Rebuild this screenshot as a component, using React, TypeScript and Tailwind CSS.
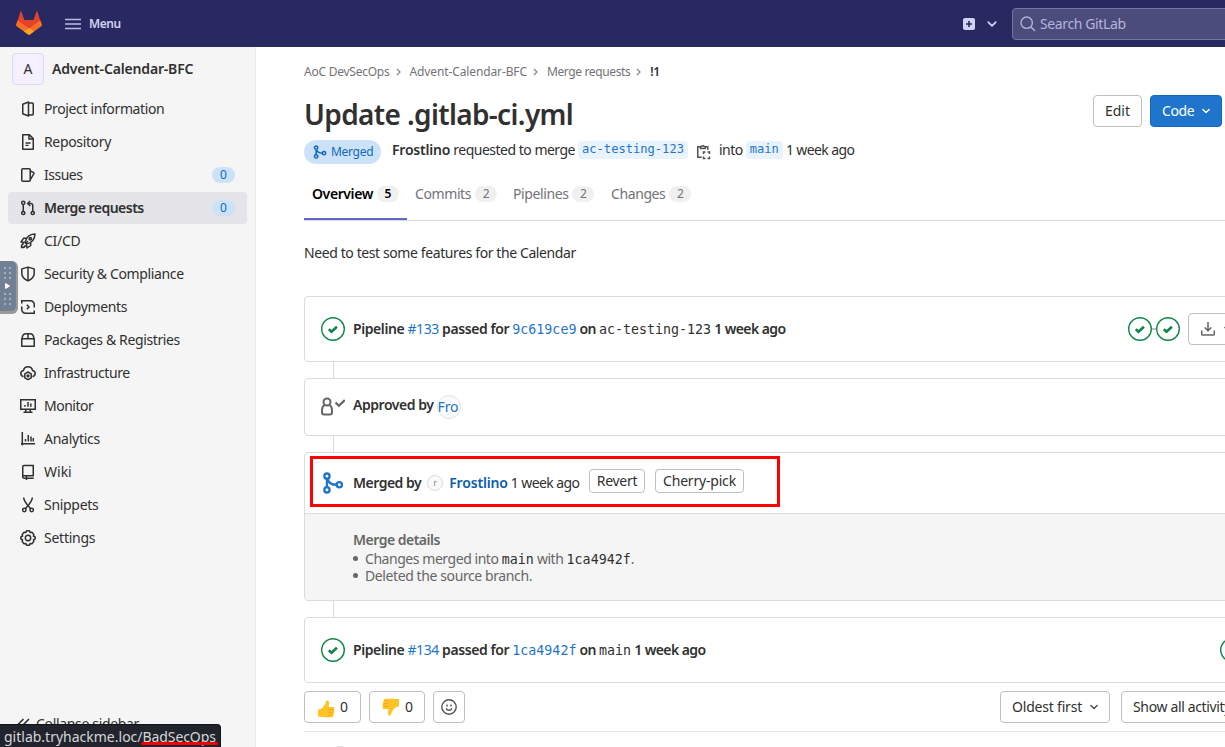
import React from "react";

type SvgProps = { className?: string; children: React.ReactNode; size?: number; sw?: number };

function Icon({ className = "", children, size = 16, sw = 1.5 }: SvgProps) {
  return (
    <svg
      width={size}
      height={size}
      viewBox="0 0 16 16"
      fill="none"
      stroke="currentColor"
      strokeWidth={sw}
      className={`block shrink-0 ${className}`}
    >
      {children}
    </svg>
  );
}

function Chevron({ className = "", size = 12 }: { className?: string; size?: number }) {
  return (
    <Icon size={size} sw={2.4} className={className}>
      <path d="M3 5.5l5 5 5-5" strokeLinecap="round" strokeLinejoin="round" />
    </Icon>
  );
}

function MergeGlyph({ size, className, sw = 1.8 }: { size: number; className?: string; sw?: number }) {
  return (
    <Icon size={size} className={className} sw={sw}>
      <circle cx="3.600" cy="3" r="1.900" />
      <circle cx="3.600" cy="13" r="1.900" />
      <circle cx="12.600" cy="9.300" r="1.900" />
      <path d="M3.600 5v6M4 5c.6 2.700 2.600 4.300 6.600 4.300" />
    </Icon>
  );
}

function StatusCheck() {
  return (
    <svg width="24" height="24" viewBox="0 0 24 24" fill="none" className="block shrink-0 text-[#108548]">
      <circle cx="12" cy="12" r="11.300" stroke="currentColor" strokeWidth="1.400" />
      <path d="M7.800 12.300l2.700 2.500 5.400-5.100" stroke="currentColor" strokeWidth="2.600" />
    </svg>
  );
}

const icons: Record<string, React.ReactNode> = {
  info: (
    <>
      <path d="M8.500 1v14L2.750 12.700V3.300z" strokeLinejoin="round" />
      <path d="M8.500 2h3.800c.500 0 .950.400.950.900v10.200c0 .500-.400.900-.950.900H8.500" />
    </>
  ),
  repo: (
    <>
      <path d="M2.750 .85h6.700l3.800 3.800v10.500H2.750z" strokeLinejoin="round" />
      <path d="M9 1v4h4.200" />
      <path d="M5.500 9h5M5.500 11.400h3" strokeWidth="1.300" />
    </>
  ),
  issues: (
    <>
      <rect x="1.750" y="1.750" width="8.500" height="12.500" rx="1" />
      <path d="M10.400 4l3.200 1.600c.400.200.500.600.300 1L10.500 12.500" />
    </>
  ),
  mr: (
    <>
      <circle cx="3.250" cy="2.800" r="1.600" />
      <circle cx="3.250" cy="13" r="1.600" />
      <circle cx="12.750" cy="13" r="1.600" />
      <path d="M3.250 4.400v7M12.750 11.400V5.600c0-1.300-.800-2.100-2.100-2.100H8.500" />
      <path d="M10.200 1L7.700 3.500 10.200 6" />
    </>
  ),
  rocket: (
    <>
      <path d="M5 9.500C6 4.500 9.500 1.200 15 1c-.200 5.500-3.500 9-8.500 10z" strokeLinejoin="round" />
      <path d="M6 5.300H3.500L1 9l3.700.600M10.700 10v2.500L7 15l-.600-3.700" strokeLinejoin="round" />
      <circle cx="10.300" cy="5.700" r="1.200" />
      <path d="M3.800 10.500c-2 .500-2.400 2-2.300 4 2 .100 3.500-.300 4-2.300M6 10l2-2" />
    </>
  ),
  shield: (
    <>
      <path d="M8 1.100l6.200 1.800v4.300c0 3.300-2.200 5.800-6.200 7.700-4-1.900-6.200-4.400-6.200-7.700V2.900z" strokeLinejoin="round" />
      <path d="M8 1.500v13" />
    </>
  ),
  deploy: (
    <>
      <path d="M2 1.750h8.500a3.750 3.750 0 0 1 3.750 3.750v3M14 14.250H5.500a3.750 3.750 0 0 1-3.750-3.750v-3" />
      <path d="M1.750 1v3.500M14.250 15v-3.500M6.800 5.800L9 8l-2.200 2.200" />
    </>
  ),
  pkg: (
    <>
      <path d="M1.750 6.750h12.500v7.500H1.750z" strokeLinejoin="round" />
      <path d="M2.200 6.500c0-2.700 1.400-4.750 3.800-4.750h4c2.400 0 3.800 2.050 3.800 4.750M8 1.750v5" />
    </>
  ),
  infra: (
    <>
      <path d="M3.500 11.700C1.800 11.200.8 10 .8 8.500c0-1.600 1.100-2.800 2.700-3.100C4 3.200 5.700 1.800 8 1.800s4 1.400 4.500 3.600c1.600.300 2.700 1.500 2.700 3.100 0 1.500-1 2.700-2.700 3.200" />
      <path d="M8 7l3.200 1.800v4L8 14.700l-3.200-1.900v-4z" strokeLinejoin="round" />
      <circle cx="8" cy="10.800" r=".9" />
    </>
  ),
  monitor: (
    <>
      <rect x=".75" y="1.750" width="14.500" height="9.500" />
      <path d="M5 8.800V7M8 8.800V4M10.800 8.800V5.500M6 11.500l-.500 2.500M10 11.500l.500 2.500M3.500 14.200h9" />
    </>
  ),
  analytics: <path d="M2.300 1v13.500M1 12.750h14M5.500 10.500V8M8.300 10.500V4M11 10.500V5.500M13.300 10.500V7" />,
  wiki: (
    <>
      <path d="M2.750 12.500V2.500c0-.600.400-1 1-1h9.500v10.300H4.200c-.900 0-1.500.500-1.500 1.200s.600 1.250 1.500 1.250h9.500" />
      <path d="M6.500 11.800V16M13.250 11v1" />
    </>
  ),
  snippets: (
    <>
      <circle cx="4.300" cy="13" r="1.700" />
      <circle cx="11.700" cy="13" r="1.700" />
      <path d="M3.700 .5c0 2.500 1.500 4.500 3.300 7l3.700 4.200M12.300 .5c0 2.500-1.500 4.500-3.300 7l-3.700 4.200" />
    </>
  ),
  settings: (
    <>
      <path d="M6.600 .8h2.800l.700 1.700 1.900-.300 1.900 2.400-.500 1.400 1.700 1v2l-1.700 1 .500 1.400-1.900 2.400-1.900-.300-.700 1.700H6.600l-.700-1.700-1.900.300-1.900-2.400.500-1.400-1.700-1V7l1.700-1-.500-1.400 1.900-2.400 1.900.300z" strokeLinejoin="round" />
      <circle cx="8" cy="8" r="2.700" />
    </>
  ),
};

const nav: { icon: string; label: string; track: string; count?: number; active?: boolean }[] = [
  { icon: "info", label: "Project information", track: "tracking-[-0.37px]" },
  { icon: "repo", label: "Repository", track: "tracking-[-0.35px]" },
  { icon: "issues", label: "Issues", track: "tracking-[-0.5px]", count: 0 },
  { icon: "mr", label: "Merge requests", track: "tracking-[-0.53px]", count: 0, active: true },
  { icon: "rocket", label: "CI/CD", track: "tracking-[-0.3px]" },
  { icon: "shield", label: "Security & Compliance", track: "tracking-[-0.37px]" },
  { icon: "deploy", label: "Deployments", track: "tracking-[-0.37px]" },
  { icon: "pkg", label: "Packages & Registries", track: "tracking-[-0.37px]" },
  { icon: "infra", label: "Infrastructure", track: "tracking-[-0.42px]" },
  { icon: "monitor", label: "Monitor", track: "tracking-[-0.5px]" },
  { icon: "analytics", label: "Analytics", track: "tracking-[-0.25px]" },
  { icon: "wiki", label: "Wiki", track: "tracking-normal" },
  { icon: "snippets", label: "Snippets", track: "tracking-[-0.3px]" },
  { icon: "settings", label: "Settings", track: "tracking-[-0.25px]" },
];

function TopBar() {
  return (
    <header className="flex h-[47px] shrink-0 items-center bg-[#292961] text-[#d1d1f0]">
      <svg width="26" height="25" viewBox="0 0 26 25" className="ml-4 block shrink-0">
        <path d="M.3 14.200L4.400.8c.200-.600.900-.600 1.100 0L8.300 9h9.200L20.400.8c.200-.600.900-.600 1.100 0l4.200 13.400L13 24z" fill="#e24329" />
        <path d="M13 24L.7 15.200C0 14.700-.1 13.600.3 12.700L1.800 9.200 13 17.500l11.200-8.300 1.500 3.500c.400.900.3 2-.4 2.500z" fill="#fc6d26" />
        <path d="M13 24l-5-3.600 5-3.500 5 3.500z" fill="#fca326" />
      </svg>
      <svg width="16" height="12" viewBox="0 0 16 12" className="ml-[23px] block shrink-0">
        <path d="M0 1.500h16M0 6h16M0 10.500h16" stroke="#bdbde4" strokeWidth="1.500" />
      </svg>
      <span className="ml-2 w-[31px] shrink-0 text-xs font-semibold tracking-[-0.4px]">Menu</span>
      <svg width="12" height="12" viewBox="0 0 12 12" className="ml-[843px] block shrink-0">
        <rect width="12" height="12" rx="2" fill="#d1d1f0" />
        <path d="M6 3v6M3 6h6" stroke="#292961" strokeWidth="1.600" />
      </svg>
      <Chevron className="ml-[11px]" size={12} />
      <div className="ml-[14px] flex h-8 w-[300px] shrink-0 items-center rounded border border-[#7474a6] bg-[#4b4b7c] pl-[7px] text-sm text-[#b5b5da]">
        <Icon sw={1.4}>
          <circle cx="6.700" cy="6.700" r="5.700" />
          <path d="M11 11l4 4" />
        </Icon>
        <span className="ml-1 tracking-[-0.38px]">Search GitLab</span>
      </div>
    </header>
  );
}

function Sidebar() {
  return (
    <aside className="relative flex w-64 shrink-0 flex-col border-r border-[#e9e9e9] bg-[#f5f5f5] px-2 pt-1.5">
      <div className="mb-2 flex h-8 items-center pl-1">
        <span className="flex size-8 items-center justify-center rounded border border-[#e1d8f5] bg-[#f4f0ff] text-sm">A</span>
        <span className="ml-2 text-sm font-semibold tracking-[-0.17px]">Advent-Calendar-BFC</span>
      </div>
      <nav className="flex flex-col gap-px">
        {nav.map((n) => (
          <a
            key={n.label}
            className={`flex h-8 w-[239px] items-center rounded pl-3 pr-3 text-sm ${n.active ? "bg-[#e4e4e9] font-semibold" : ""}`}
          >
            <Icon>{icons[n.icon]}</Icon>
            <span className={`ml-2 ${n.track}`}>{n.label}</span>
            {n.count !== undefined && (
              <span className="ml-auto flex h-4 w-[23px] items-center justify-center rounded-full bg-[#cbe2f9] text-xs font-normal text-[#1068bf]">
                {n.count}
              </span>
            )}
          </a>
        ))}
      </nav>
      <div className="mt-auto flex h-[46px] items-center pl-2 text-sm">
        <Icon sw={1.600}>
          <path d="M7.500 3L2.500 8l5 5M13 3L8 8l5 5" />
        </Icon>
        <span className="ml-1 tracking-[-0.33px]">Collapse sidebar</span>
      </div>
      <div className="absolute left-0 top-[214px] flex h-[53px] w-[18px] items-start rounded-r-md bg-[#999a9b]">
        <svg width="16" height="50" viewBox="0 0 16 50" className="block">
          <path d="M0 0h11a5 5 0 0 1 5 5v40a5 5 0 0 1-5 5H0z" fill="#728096" />
          <path d="M5.500 22.500v5l4-2.500z" fill="#fff" stroke="#fff" strokeLinejoin="round" />
          <path d="M5 6v14M10 6v14M5 32v14M10 32v14" stroke="#a5afbf" strokeWidth="2" strokeDasharray="2 3" />
        </svg>
      </div>
      <div className="absolute -bottom-px left-0 flex h-[24px] w-[221px] items-center rounded-tr border-r border-t border-[#111319] bg-[#21242c] pl-1 text-sm text-[#d6d7d9]">
        <span>gitlab.tryhackme.loc/</span>
        <span className="relative tracking-[-0.1px]">
          BadSecOps
          <span className="absolute -left-0.5 -right-0.5 bottom-[1.5px] h-[3px] rounded bg-[#f40000]" />
        </span>
      </div>
    </aside>
  );
}

function Mono({ children, className = "" }: { children: React.ReactNode; className?: string }) {
  return <span className={`font-['DejaVu_Sans_Mono',monospace] text-[13.300px] font-normal tracking-normal ${className}`}>{children}</span>;
}

function Ref({ children, className = "" }: { children: React.ReactNode; className?: string }) {
  return (
    <span className={`flex h-[18px] items-center rounded bg-[#e9f3fc] px-1 font-['DejaVu_Sans_Mono',monospace] text-[12.100px] text-[#1f75cb] ${className}`}>
      {children}
    </span>
  );
}

function Card({ children, className }: { children: React.ReactNode; className: string }) {
  return <section className={`w-[1000px] shrink-0 rounded border border-[#dbdbdb] bg-white ${className}`}>{children}</section>;
}

function Connector() {
  return <div className="ml-[29px] h-4 w-px shrink-0 bg-[#dbdbdb]" />;
}

const btn = "flex items-center rounded border border-[#bfbfbf] bg-white text-sm";

function Thumb({ down = false }: { down?: boolean }) {
  return (
    <svg width="18" height="18" viewBox="0 0 18 18" className={`block shrink-0 ${down ? "-scale-100" : "mt-1"}`}>
      <path d="M1 9.500C3.500 9.300 5.200 8.500 6.500 6.500 7.500 5 8.500 3.800 9 1.600 9.200.6 10 .2 10.900.6c1.300.6 1.400 2.200 1.100 3.600L11.500 7h4.300c1.800 0 2.200 2.200.9 2.800 1.100.600 1 2.300-.1 2.700.8.700.5 2.200-.5 2.500.4 1.100-.3 2.200-1.600 2.200H8C5.500 17.200 4 16.800 1 16.800z" fill="#ffc326" />
      <path d="M11.500 9.700h5M11.500 12.400h4.800M11.500 15h4.300" stroke="#e99b16" strokeWidth=".6" />
    </svg>
  );
}

function PipelineText({ id, sha, branch }: { id: string; sha: string; branch: string }) {
  return (
    <>
      <span className="tracking-[-0.42px]">
        Pipeline <span className="font-normal text-[#1f75cb]">{id}</span> passed for{" "}
      </span>
      <Mono className="text-[#1f75cb]">{sha}</Mono>
      <span className="tracking-[-0.55px]"> on </span>
      <Mono>{branch}</Mono>
      <span className="tracking-[-0.57px]"> 1 week ago</span>
    </>
  );
}

const tabs = [
  { label: "Overview", n: 5, w: "w-[103px]" },
  { label: "Commits", n: 2, w: "w-[98px]" },
  { label: "Pipelines", n: 2, w: "w-[98px]" },
  { label: "Changes", n: 2, w: "w-[96px]" },
];

const crumbs = [
  { label: "AoC DevSecOps", track: "tracking-[-0.24px]" },
  { label: "Advent-Calendar-BFC", track: "tracking-[-0.12px]" },
  { label: "Merge requests", track: "tracking-[-0.37px]" },
];

export default function App() {
  return (
    <div className="flex h-[747px] w-[1225px] flex-col overflow-hidden bg-white font-['Noto_Sans',sans-serif] text-[#303030]">
      <TopBar />
      <div className="flex min-h-0 flex-1">
        <Sidebar />
        <main className="flex min-w-0 flex-1 flex-col overflow-hidden whitespace-nowrap pl-12">
          <div className="flex h-[48px] shrink-0 items-center pt-px text-xs text-[#737278]">
            {crumbs.map((c) => (
              <React.Fragment key={c.label}>
                <span className={c.track}>{c.label}</span>
                <svg width="6" height="8" viewBox="0 0 6 8" className="ml-[6px] mr-[8px] block">
                  <path d="M1 1l3 3-3 3" fill="none" stroke="#89888d" strokeWidth="1.300" />
                </svg>
              </React.Fragment>
            ))}
            <span className="font-semibold tracking-[-0.4px] text-[#303030]">!1</span>
          </div>

          <div className="flex h-[45px] shrink-0">
            <h1 className="w-[789px] text-[28px] font-semibold leading-[38px] tracking-[-0.64px]">Update .gitlab-ci.yml</h1>
            <button className={`${btn} h-8 w-[49px] justify-center`}>Edit</button>
            <button className="ml-2 flex h-8 w-[72px] items-center rounded border border-[#1068bf] bg-[#1f75cb] pl-[11px] text-sm text-white">
              <span className="w-8 tracking-[-0.4px]">Code</span>
              <Chevron size={10} className="ml-[7px]" />
            </button>
          </div>

          <div className="flex h-6 shrink-0 items-start text-sm">
            <span className="flex h-6 w-[77px] items-center rounded-full bg-[#cbe2f9] pl-[9px] text-xs text-[#1068bf]">
              <MergeGlyph size={14} />
              <span className="ml-1 tracking-[-0.3px]">Merged</span>
            </span>
            <div className="ml-[11px] flex h-5 items-center">
              <span className="font-semibold tracking-[-0.2px]">Frostlino</span>
              <span className="ml-[3px] tracking-[-0.5px]">requested to merge</span>
              <Ref className="ml-[3px]">ac-testing-123</Ref>
              <Icon className="ml-[7px] mt-1 text-[#535158]" sw={1.5}>
                <path d="M5 2.750H2.750v10.500h4M10.500 2.750h2.250V6" />
                <path d="M5.500 4.500V2.500h1.200a1.200 1.200 0 0 1 2.300 0h1.300v2z" strokeLinejoin="round" />
                <path d="M8.500 10V8h2M12.500 8h2v2M14.500 12.500v2h-2M10.500 14.500h-2v-2" />
              </Icon>
              <span className="ml-2 tracking-[-0.5px]">into</span>
              <Ref className="ml-[3px]">main</Ref>
              <span className="ml-[3px] tracking-[-0.6px]">1 week ago</span>
            </div>
          </div>

          <div className="flex h-[57px] w-[1000px] shrink-0 items-end border-b border-[#dbdbdb] text-sm text-[#737278]">
            {tabs.map((t, i) => (
              <div
                key={t.label}
                className={`flex h-[51px] items-center pl-2 ${t.w} ${i === 0 ? "border-b-2 border-[#6666c4] font-semibold text-black" : "border-b-2 border-transparent"}`}
              >
                <span className="tracking-[-0.4px]">{t.label}</span>
                <span className="ml-1 flex h-4 w-[22px] items-center justify-center rounded-full bg-[#f0f0f0] text-xs">{t.n}</span>
              </div>
            ))}
          </div>

          <p className="flex h-[75px] shrink-0 items-start pt-[22px] text-sm leading-5 tracking-[-0.4px]">Need to test some features for the Calendar</p>

          <Card className="flex h-[66px] items-center pl-4 text-sm font-semibold">
            <StatusCheck />
            <div className="ml-2 w-[775px]">
              <PipelineText id="#133" sha="9c619ce9" branch="ac-testing-123" />
            </div>
            <StatusCheck />
            <span className="h-0.5 w-1 bg-[#bfbfbf]" />
            <StatusCheck />
            <button className={`${btn} ml-2 h-8 w-14 shrink-0 pl-[11px] text-[#666]`}>
              <Icon>
                <path d="M8 1v8M4.800 6.500L8 9.700l3.200-3.200M1.750 9.500v3.700c0 .500.400.800.800.800h10.900c.500 0 .800-.300.800-.800V9.500" />
              </Icon>
              <Chevron size={10} className="ml-[7px]" />
            </button>
          </Card>
          <Connector />
          <Card className="flex h-[58px] items-center pl-4 text-sm font-semibold">
            <svg width="24" height="20" viewBox="0 0 24 20" fill="none" stroke="currentColor" className="block text-[#666]" strokeWidth="2">
              <circle cx="6" cy="5" r="3.500" />
              <path d="M3.500 8C1.700 9.200 1 10.800 1 13v2.500c0 1.500.5 2 2 2h6c1.500 0 2-.5 2-2V13c0-2.200-.7-3.800-2.500-5" />
              <path d="M14.500 5.500l3.300 3.200 6-5.600" strokeWidth="2.200" />
            </svg>
            <span className="-mt-1 ml-2 tracking-[-0.45px]">Approved by</span>
            <span className="-mt-px ml-[3px] flex size-6 items-center overflow-hidden rounded-full border border-[#e4e4e4] bg-[#fafafa] font-normal tracking-[-0.2px] text-[#1f75cb]">Fro</span>
          </Card>
          <Connector />
          <section className="relative h-[149px] w-[1000px] shrink-0 overflow-hidden rounded border border-[#dbdbdb]">
            <div className="flex h-[61px] items-center border-b border-[#dbdbdb] pl-[17px] text-sm">
              <MergeGlyph size={22} className="text-[#1f75cb]" sw={1.700} />
              <span className="ml-[9px] font-semibold tracking-[-0.5px]">Merged by</span>
              <span className="ml-[6px] flex size-4 items-center justify-center rounded-full border border-[#dcdcdc] bg-[#fafafa] text-[8px] text-[#777]">r</span>
              <span className="ml-[6px] font-semibold tracking-[-0.15px] text-[#0b5cad]">Frostlino</span>
              <span className="ml-[3px] tracking-[-0.6px]">1 week ago</span>
              <div className="-mt-1 ml-auto flex w-[714px] gap-[10px]">
                <button className={`${btn} h-6 w-14 justify-center border-[#aaa] tracking-[-0.3px]`}>Revert</button>
                <button className={`${btn} h-6 w-[89px] justify-center border-[#aaa] tracking-[-0.2px]`}>Cherry-pick</button>
              </div>
            </div>
            <div className="h-[86px] bg-[#f5f5f5] pl-12 pt-[17px] text-sm leading-[17px] text-[#666]">
              <p className="mb-px font-semibold leading-[18px] tracking-[-0.5px]">Merge details</p>
              <p className="flex h-[17px] items-center">
                <span className="mr-[7px] size-[5px] rounded-full bg-[#666]" />
                <span className="tracking-[-0.45px]">Changes merged into <Mono className="text-[#303030]">main</Mono> with <Mono className="text-[#303030]">1ca4942f</Mono>.</span>
              </p>
              <p className="flex h-[17px] items-center">
                <span className="mr-[7px] size-[5px] rounded-full bg-[#666]" />
                <span className="tracking-[-0.4px]">Deleted the source branch.</span>
              </p>
            </div>
            <div className="absolute left-[5px] top-[3px] h-[51px] w-[470px] border-[3px] border-[#f00]" />
          </section>
          <Connector />
          <Card className="flex h-[66px] items-center pl-4 text-sm font-semibold">
            <StatusCheck />
            <div className="ml-2 w-[867px]">
              <PipelineText id="#134" sha="1ca4942f" branch="main" />
            </div>
            <StatusCheck />
          </Card>

          <div className="flex h-[49px] w-[1000px] shrink-0 items-start border-b border-[#e9e9e9] pt-2">
            <button className={`${btn} h-8 w-[57px] pl-3`}>
              <Thumb />
              <span className="ml-[5px]">0</span>
            </button>
            <button className={`${btn} ml-2 h-8 w-14 pl-3`}>
              <Thumb down />
              <span className="ml-[5px]">0</span>
            </button>
            <button className={`${btn} ml-2 h-8 w-8 justify-center text-[#535158]`}>
              <Icon sw={1.400}>
                <circle cx="8" cy="8" r="7.200" />
                <path d="M5.200 9.200c.4 1.400 1.400 2.100 2.800 2.100s2.400-.7 2.800-2.100M6 5.500v2M10 5.500v2" />
              </Icon>
            </button>
            <button className={`${btn} ml-[535px] h-8 w-[110px] pl-[11px]`}>
              <span className="w-[70px] tracking-[-0.2px]">Oldest first</span>
              <Chevron size={10} className="ml-[7px] text-[#535158]" />
            </button>
            <button className={`${btn} ml-[11px] h-8 w-[150px] pl-[11px] tracking-[-0.35px]`}>Show all activity</button>
          </div>
          <div className="ml-[26px] mt-[14px] size-5 shrink-0 rounded-full bg-[#dcdcdc]" />
        </main>
      </div>
    </div>
  );
}
